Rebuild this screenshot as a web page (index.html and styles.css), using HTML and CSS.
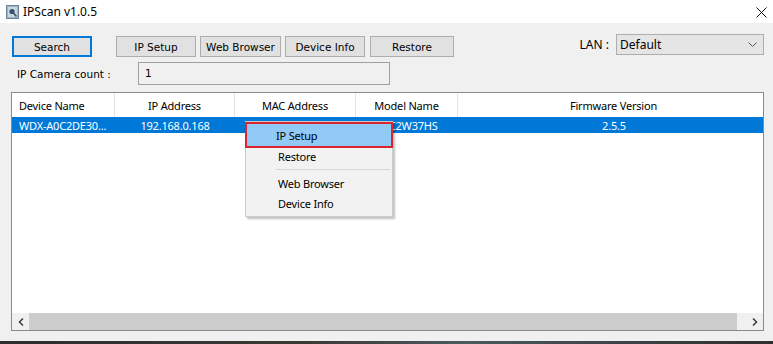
FILE: index.html
```html
<!DOCTYPE html>
<html lang="en">
<head>
    <meta charset="UTF-8">
    <title>IPScan v1.0.5</title>
    <link rel="stylesheet" href="styles.css">
</head>
<body>
    <div class="window">
        <div class="titlebar">
            <svg class="app-icon" width="13" height="14" viewBox="0 0 13 14">
                <rect x="0.5" y="0.5" width="12" height="13" fill="#9fb3c6" stroke="#6d8399"/>
                <rect x="2" y="2" width="9" height="10" fill="#c9d6e2"/>
                <circle cx="6" cy="6.5" r="2.6" fill="#36506b"/>
                <path d="M7.6 8.2 L10.5 11.5" stroke="#36506b" stroke-width="1.6"/>
            </svg>
            <span class="title">IPScan v1.0.5</span>
            <svg class="close" width="11" height="11" viewBox="0 0 11 11">
                <path d="M0.5 0.5 L10.5 10.5 M10.5 0.5 L0.5 10.5" stroke="#111" stroke-width="1"/>
            </svg>
        </div>

        <div class="client">
            <div class="toolbar">
                <button class="btn btn-default">Search</button>
                <div class="btn-group">
                    <button class="btn">IP Setup</button>
                    <button class="btn btn-web">Web Browser</button>
                    <button class="btn">Device Info</button>
                    <button class="btn btn-restore">Restore</button>
                </div>
                <div class="lan">
                    <span class="lan-label">LAN :</span>
                    <div class="select">
                        <span>Default</span>
                        <svg width="9" height="5" viewBox="0 0 9 5"><path d="M0.5 0.5 L4.5 4.5 L8.5 0.5" fill="none" stroke="#555"/></svg>
                    </div>
                </div>
            </div>

            <div class="count-row">
                <span class="count-label">IP Camera count :</span>
                <div class="count-box">1</div>
            </div>

            <div class="listview">
                <div class="list-viewport">
                    <div class="list-head">
                        <div class="col c1 left">Device Name</div>
                        <div class="col c2">IP Address</div>
                        <div class="col c3">MAC Address</div>
                        <div class="col c4">Model Name</div>
                        <div class="col c5">Firmware Version</div>
                    </div>
                    <div class="list-row selected">
                        <div class="col c1 left">WDX-A0C2DE30...</div>
                        <div class="col c2">192.168.0.168</div>
                        <div class="col c3">0a:0c:de:30:00:10</div>
                        <div class="col c4">SCC2W37HS</div>
                        <div class="col c5">2.5.5</div>
                    </div>
                </div>
                <div class="hscroll">
                    <div class="arrow">
                        <svg width="6" height="8" viewBox="0 0 6 8"><path d="M5 0.5 L1.5 4 L5 7.5" fill="none" stroke="#444" stroke-width="1.6"/></svg>
                    </div>
                    <div class="thumb"></div>
                    <div class="track"></div>
                    <div class="arrow">
                        <svg width="6" height="8" viewBox="0 0 6 8"><path d="M1 0.5 L4.5 4 L1 7.5" fill="none" stroke="#444" stroke-width="1.6"/></svg>
                    </div>
                </div>

                <div class="context-menu">
                    <div class="menu-item active">IP Setup</div>
                    <div class="menu-item">Restore</div>
                    <div class="menu-sep"></div>
                    <div class="menu-item">Web Browser</div>
                    <div class="menu-item">Device Info</div>
                </div>
            </div>
        </div>
        <div class="desktop-edge"></div>
    </div>
</body>
</html>
```

FILE: styles.css
```css
body {
    margin: 0;
    background: #f0f0f0;
    font-family: "Noto Sans", "Open Sans", sans-serif;
    font-size: 12px;
    color: #000;
}
.window {
    width: 773px;
    height: 344px;
    overflow: hidden;
    display: flex;
    flex-direction: column;
}
.titlebar {
    height: 23px;
    background: #fff;
    display: flex;
    align-items: center;
    padding-left: 6px;
    box-sizing: border-box;
}
.app-icon {
    margin-right: 4px;
}
.title {
    font-size: 12px;
}
.close {
    margin-left: auto;
    margin-right: 6px;
    margin-top: 1px;
}
.client {
    flex: 1;
    padding: 11px 9px 0 12px;
    position: relative;
}
.toolbar {
    display: flex;
    align-items: flex-start;
    height: 23px;
}
.btn {
    font-family: "DejaVu Sans", sans-serif;
    font-size: 10.5px;
    height: 21px;
    width: 80px;
    margin-top: 2px;
    padding: 0;
    background: #e1e1e1;
    border: 1px solid #adadad;
    color: #000;
}
.btn-default {
    border: 2px solid #0078d7;
}
.btn-group {
    display: flex;
    gap: 4px;
    margin-left: 24px;
}
.btn-web {
    width: 81px;
}
.btn-restore {
    width: 84px;
    margin-left: 1px;
}
.lan {
    margin-left: auto;
    display: flex;
    align-items: center;
}
.lan-label {
    margin-right: 7px;
}
.select {
    width: 148px;
    height: 21px;
    box-sizing: border-box;
    background: #e5e5e5;
    border: 1px solid #adadad;
    display: flex;
    align-items: center;
    justify-content: space-between;
    padding: 0 6px 0 3px;
}
.count-row {
    display: flex;
    align-items: center;
    margin-top: 5px;
    height: 23px;
}
.count-label {
    font-family: "DejaVu Sans", sans-serif;
    font-size: 10.5px;
    width: 121px;
    padding-left: 5px;
}
.count-box {
    width: 252px;
    height: 23px;
    box-sizing: border-box;
    border: 1px solid #a0a0a0;
    background: #f0f0f0;
    font-family: "DejaVu Sans", sans-serif;
    font-size: 10.5px;
    padding: 4px 0 0 6px;
}
.listview {
    position: relative;
    margin-top: 7px;
    margin-left: -1px;
    width: 753px;
    height: 239px;
    box-sizing: border-box;
    border: 1px solid #8a8a8a;
    background: #fff;
    display: flex;
    flex-direction: column;
}
.list-viewport {
    flex: 1;
    overflow: hidden;
}
.list-head, .list-row {
    display: flex;
    width: 758px;
}
.list-head {
    height: 24px;
}
.list-head .col {
    border-right: 1px solid #e5e5e5;
    line-height: 25px;
}
.list-row {
    height: 16px;
    line-height: 17px;
}
.selected {
    background: #0078d7;
    color: #fff;
}
.col {
    box-sizing: border-box;
    text-align: center;
    white-space: nowrap;
    overflow: hidden;
    font-size: 11px;
    letter-spacing: -0.2px;
}
.col.left {
    text-align: left;
    padding-left: 7px;
}
.c1 { width: 103px; }
.c2 { width: 120px; }
.c3 { width: 121px; }
.c4 { width: 102px; }
.c5 { width: 312px; border-right: none; }
.hscroll {
    height: 17px;
    display: flex;
    background: #f0f0f0;
}
.arrow {
    width: 17px;
    display: flex;
    align-items: center;
    justify-content: center;
}
.thumb {
    width: 708px;
    background: #cdcdcd;
}
.track {
    flex: 1;
}
.context-menu {
    position: absolute;
    left: 233px;
    top: 28px;
    width: 148px;
    box-sizing: border-box;
    background: #f2f2f2;
    border: 1px solid #cccccc;
    box-shadow: 2px 2px 2px rgba(0, 0, 0, 0.25);
    padding: 2px 2px 3px 2px;
    font-size: 11px;
    letter-spacing: -0.2px;
}
.menu-item {
    height: 20px;
    line-height: 21px;
    padding-left: 30px;
}
.menu-item.active {
    height: 22px;
    line-height: 23px;
    margin: 0 -1px 0 -1px;
    padding-left: 29px;
    background: #91c9f7;
    outline: 2px solid #d9262e;
}
.menu-sep {
    height: 1px;
    background: #d7d7d7;
    margin: 3px 0 3px 28px;
}
.desktop-edge {
    height: 3px;
    background: linear-gradient(90deg, #2d2d2d 0%, #3b3a36 40%, #4b5a5e 60%, #2f2f2f 100%);
}
```
